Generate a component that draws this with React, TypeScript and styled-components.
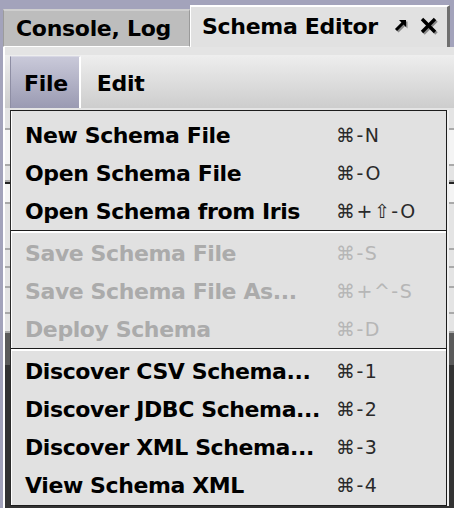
import styled, { createGlobalStyle } from 'styled-components';

const GlobalStyle = createGlobalStyle`
  html, body {
    margin: 0;
    padding: 0;
    background: #a3a3bb;
  }
  body {
    font-family: "DejaVu Sans", "Liberation Sans", sans-serif;
  }
`;

type Item = { label: string; keys: string; disabled?: boolean };

const groups: Item[][] = [
  [
    { label: 'New Schema File', keys: '⌘-N' },
    { label: 'Open Schema File', keys: '⌘-O' },
    { label: 'Open Schema from Iris', keys: '⌘+⇧-O' },
  ],
  [
    { label: 'Save Schema File', keys: '⌘-S', disabled: true },
    { label: 'Save Schema File As...', keys: '⌘+^-S', disabled: true },
    { label: 'Deploy Schema', keys: '⌘-D', disabled: true },
  ],
  [
    { label: 'Discover CSV Schema...', keys: '⌘-1' },
    { label: 'Discover JDBC Schema...', keys: '⌘-2' },
    { label: 'Discover XML Schema...', keys: '⌘-3' },
    { label: 'View Schema XML', keys: '⌘-4' },
  ],
];

const PopoutIcon = () => (
  <svg width="16" height="16" viewBox="0 0 16 16">
    <g stroke="#8a8a8a" strokeWidth="3" fill="#8a8a8a" transform="translate(1.5 1.5)">
      <line x1="3" y1="12" x2="10" y2="5" />
      <polygon points="6,2 13,2 13,9" stroke="none" />
    </g>
    <g stroke="#000" strokeWidth="3" fill="#000">
      <line x1="3" y1="12" x2="10" y2="5" />
      <polygon points="6,2 13,2 13,9" stroke="none" />
    </g>
  </svg>
);

const CloseIcon = () => (
  <svg width="20" height="20" viewBox="0 0 20 20">
    <g stroke="#8a8a8a" strokeWidth="3.4" transform="translate(1.5 1.5)">
      <line x1="3" y1="3" x2="16" y2="16" />
      <line x1="16" y1="3" x2="3" y2="16" />
    </g>
    <g stroke="#000" strokeWidth="3.4">
      <line x1="3" y1="3" x2="16" y2="16" />
      <line x1="16" y1="3" x2="3" y2="16" />
    </g>
  </svg>
);

const App = () => {
  return (
    <>
      <GlobalStyle />
      <Screen>
        <TabStrip>
          <Tab>Console, Log</Tab>
          <Tab active>
            <TabTitle>Schema Editor</TabTitle>
            <TabIcons>
              <PopoutIcon />
              <CloseIcon />
            </TabIcons>
          </Tab>
        </TabStrip>
        <Panel>
          <MenuBar>
            <MenuTitle open>File</MenuTitle>
            <MenuTitle>Edit</MenuTitle>
          </MenuBar>
          <Form>
            <FieldRow h={22} />
            <FieldRow h={36} boxed />
            <FieldRow h={16} />
            <FieldRow h={22} boxed dark />
            <FieldRow h={46} />
            <FieldRow h={18} />
            <FieldRow h={20} />
            <FieldRow h={26} />
            <FieldRow h={19} />
            <ScrollPane />
          </Form>
        </Panel>
        <Menu>
          {groups.map((group, gi) => (
            <Group key={gi} first={gi === 0}>
              {group.map((item) => (
                <MenuItem key={item.label} disabled={item.disabled}>
                  <Label>{item.label}</Label>
                  <Keys>{item.keys}</Keys>
                </MenuItem>
              ))}
            </Group>
          ))}
        </Menu>
      </Screen>
    </>
  );
};

const Screen = styled.div`
  position: relative;
  width: 454px;
  height: 508px;
  overflow: hidden;
  background: #a3a3bb;
  display: flex;
  flex-direction: column;
`;

const TabStrip = styled.div`
  height: 47px;
  padding-left: 3px;
  display: flex;
  align-items: flex-end;
  flex-shrink: 0;
`;

const Tab = styled.div<{ active?: boolean }>`
  box-sizing: border-box;
  display: flex;
  align-items: center;
  font-size: 22px;
  letter-spacing: -0.3px;
  font-weight: bold;
  color: #000;
  height: ${(p) => (p.active ? 42 : 38)}px;
  width: ${(p) => (p.active ? 260 : 187)}px;
  padding-left: ${(p) => (p.active ? 11 : 12)}px;
  background: ${(p) => (p.active ? '#e1e1e1' : '#bdbdbd')};
  border-top: 2px solid ${(p) => (p.active ? '#ffffff' : '#cfcfcf')};
  border-left: 1px solid ${(p) => (p.active ? '#ffffff' : '#9c9c9c')};
  border-right: ${(p) => (p.active ? '3px solid #6f6f6f' : '1px solid #9a9a9a')};
  border-bottom: ${(p) => (p.active ? 'none' : '1px solid #ffffff')};
`;

const TabTitle = styled.span`
  flex: 1;
  padding-bottom: 2px;
`;

const TabIcons = styled.span`
  display: flex;
  align-items: center;
  gap: 10px;
  margin-right: 8px;
  margin-bottom: 2px;
`;

const Panel = styled.div`
  flex: 1;
  margin-left: 3px;
  background: #e4e4e4;
  border-left: 2px solid #ffffff;
  display: flex;
  flex-direction: column;
  padding-top: 8px;
`;

const MenuBar = styled.div`
  height: 53px;
  display: flex;
  align-items: stretch;
  padding-left: 5px;
  background: linear-gradient(#eeeeee, #cdcdcd);
  flex-shrink: 0;
`;

const MenuTitle = styled.div<{ open?: boolean }>`
  display: flex;
  align-items: center;
  padding: 2px ${(p) => (p.open ? 11 : 14)}px 0 ${(p) => (p.open ? 13 : 16)}px;
  font-size: 22px;
  letter-spacing: -0.3px;
  font-weight: bold;
  color: #000;
  margin-top: 1px;
  background: ${(p) => (p.open ? 'linear-gradient(#c9c9d9, #9a9ab2)' : 'transparent')};
  border-top: ${(p) => (p.open ? '1px solid #d8d8e4' : 'none')};
  border-left: ${(p) => (p.open ? '1px solid #8e8ea4' : 'none')};
  border-right: ${(p) => (p.open ? '2px solid #ffffff' : 'none')};
`;

const Form = styled.div`
  flex: 1;
  display: flex;
  flex-direction: column;
`;

const FieldRow = styled.div<{ h: number; boxed?: boolean; dark?: boolean }>`
  height: ${(p) => p.h}px;
  box-sizing: border-box;
  border-bottom: 2px solid #a9a9a9;
  background: ${(p) => (p.boxed ? '#f4f4f4' : '#e4e4e4')};
  border-top: ${(p) => (p.dark ? '2px solid #222' : 'none')};
`;

const ScrollPane = styled.div`
  flex: 1;
  background: #333333;
  border-top: 32px solid #5a5a5a;
`;

const Menu = styled.div`
  position: absolute;
  left: 10px;
  top: 110px;
  width: 437px;
  height: 396px;
  box-sizing: border-box;
  background: #e1e1e1;
  border: 1px solid #1c1c1c;
  border-left-color: #2a2a2a;
  box-shadow: inset 1px 0 0 #ffffff, 2px 0 0 #f0f0f0;
  padding-top: 5px;
`;

const Group = styled.div<{ first?: boolean }>`
  border-top: ${(p) => (p.first ? 'none' : '1px solid #1c1c1c')};
  box-shadow: ${(p) => (p.first ? 'none' : 'inset 0 2px 0 #ffffff')};
  padding-top: ${(p) => (p.first ? 0 : 3)}px;
`;

const MenuItem = styled.div<{ disabled?: boolean }>`
  height: 38px;
  display: grid;
  grid-template-columns: 311px 1fr;
  align-items: center;
  padding-left: 14px;
  color: ${(p) => (p.disabled ? '#ababab' : '#000')};
  & > span:last-child {
    color: ${(p) => (p.disabled ? '#b6b6b6' : '#2a2a2a')};
  }
`;

const Label = styled.span`
  font-size: 22px;
  letter-spacing: -0.4px;
  font-weight: bold;
  white-space: nowrap;
`;

const Keys = styled.span`
  font-size: 19px;
  letter-spacing: 1.5px;
  white-space: nowrap;
`;

export default App;
